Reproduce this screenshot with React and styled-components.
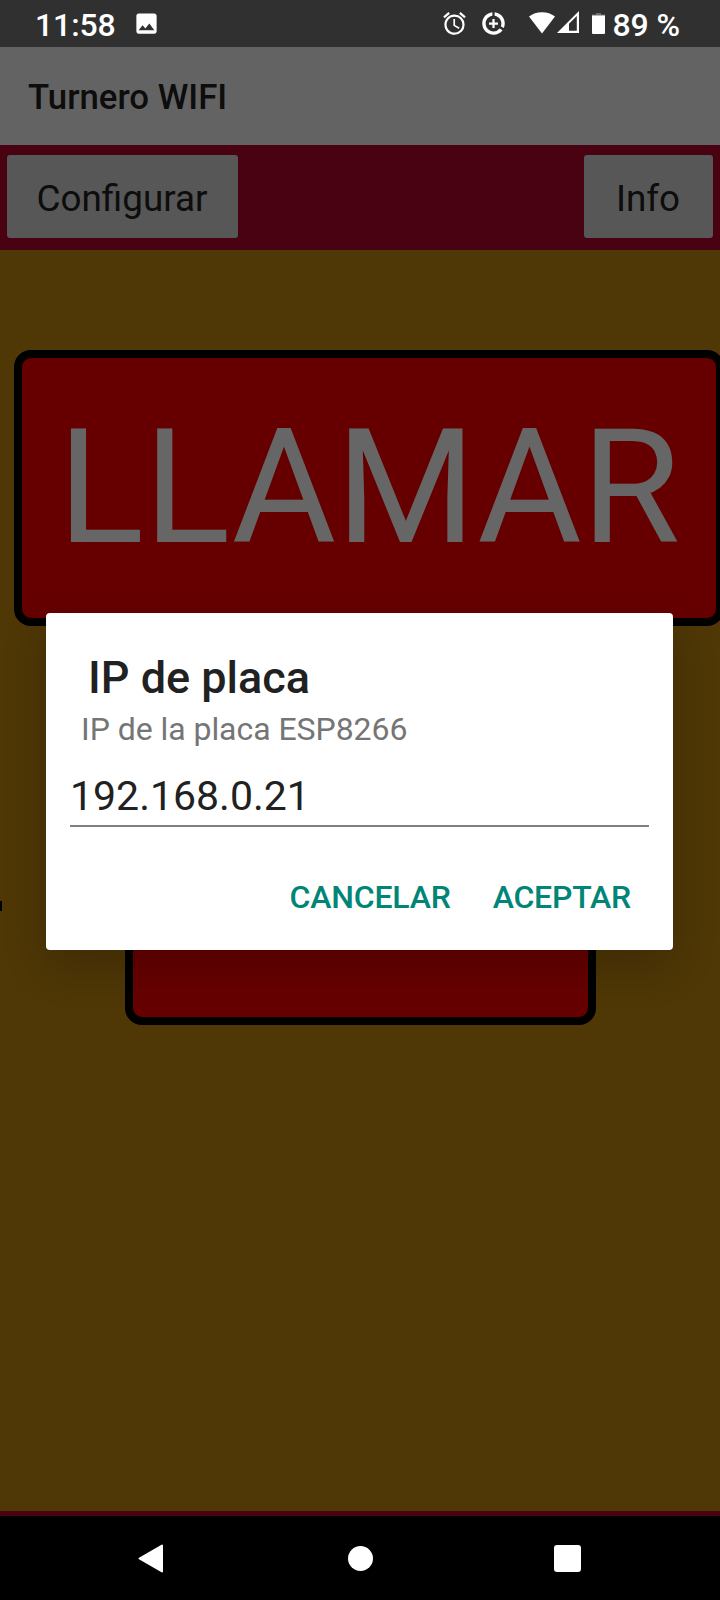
import React, { useState } from "react";
import styled, { createGlobalStyle } from "styled-components";
import { MdAlarm, MdDataSaverOn, MdImage } from "react-icons/md";

const GlobalStyle = createGlobalStyle`
  * {
    box-sizing: border-box;
  }
  body {
    margin: 0;
    background: #000;
    font-family: Roboto, "Noto Sans", sans-serif;
  }
  button,
  input {
    font-family: inherit;
    border: none;
    outline: none;
    padding: 0;
    margin: 0;
  }
`;

const WifiIcon = () => (
  <svg width="26" height="22" viewBox="0 0 26 22">
    <path d="M0 4.6C3.6 1.7 8 0.2 13 0.2s9.400 1.500 13 4.400L13 21.500z" fill="#fff" />
  </svg>
);

const SignalIcon = () => (
  <svg width="22" height="22" viewBox="0 0 22 22">
    <path d="M0 22L22 0v22zM12 19.800h7.800V5l-7.800 7.800z" fill="#fff" fillRule="evenodd" />
  </svg>
);

const BatteryIcon = () => (
  <svg width="13" height="21" viewBox="0 0 13 21">
    <path d="M4 0h5v1.500h4V3H0V1.500h4z" fill="#6e6e6e" />
    <path d="M0 2.500h13V20a1 1 0 0 1-1 1H1a1 1 0 0 1-1-1z" fill="#fff" />
  </svg>
);

const BackIcon = () => (
  <svg width="25" height="29" viewBox="0 0 25 29">
    <path
      d="M1.500 14.500L24 1.500v26z"
      fill="#fff"
      stroke="#fff"
      strokeWidth="2"
      strokeLinejoin="round"
    />
  </svg>
);

const App = () => {
  const [ip, setIp] = useState("192.168.0.21");

  return (
    <Phone>
      <GlobalStyle />
      <StatusBar>
        <StatusText>11:58</StatusText>
        <IconSlot $left={17}>
          <MdImage size={27} />
        </IconSlot>
        <StatusRight>
          <IconSlot>
            <MdAlarm size={27} />
          </IconSlot>
          <IconSlot $left={12}>
            <MdDataSaverOn size={27} />
          </IconSlot>
          <IconSlot $left={22} $lift={1}>
            <WifiIcon />
          </IconSlot>
          <IconSlot $left={2} $lift={4}>
            <SignalIcon />
          </IconSlot>
          <IconSlot $left={13}>
            <BatteryIcon />
          </IconSlot>
          <StatusText $left={8}>89 %</StatusText>
        </StatusRight>
      </StatusBar>

      <Screen>
        <TitleBar>Turnero WIFI</TitleBar>
        <Toolbar>
          <ToolbarButton $width={231}>Configurar</ToolbarButton>
          <ToolbarButton $width={129}>Info</ToolbarButton>
        </Toolbar>
        <Board>
          <CallButton $width={710} $height={276}>
            LLAMAR
          </CallButton>
          <Dash />
          <CallButton $width={471} $height={114} $center />
        </Board>
        <BottomStrip />

        <Scrim>
          <Dialog>
            <DialogTitle>IP de placa</DialogTitle>
            <DialogMessage>IP de la placa ESP8266</DialogMessage>
            <DialogInput value={ip} onChange={(e) => setIp(e.target.value)} />
            <DialogActions>
              <DialogButton>CANCELAR</DialogButton>
              <DialogButton>ACEPTAR</DialogButton>
            </DialogActions>
          </Dialog>
        </Scrim>
      </Screen>

      <NavBar>
        <BackIcon />
        <HomeDot />
        <RecentSquare />
      </NavBar>
    </Phone>
  );
};

const Phone = styled.div`
  display: flex;
  flex-direction: column;
  width: 720px;
  height: 1600px;
  overflow: hidden;
`;

const StatusBar = styled.div`
  display: flex;
  align-items: center;
  height: 47px;
  padding: 0 40px 0 35px;
  background: #303030;
  color: #fff;
`;

const StatusText = styled.span`
  margin-left: ${(props) => props.$left || 0}px;
  padding-top: 2px;
  font-size: 32px;
  font-weight: 500;
  line-height: 50px;
  letter-spacing: -0.1px;
  white-space: pre;
`;

const IconSlot = styled.span`
  display: flex;
  margin-left: ${(props) => props.$left || 0}px;
  padding-bottom: ${(props) => props.$lift || 0}px;
`;

const StatusRight = styled.div`
  display: flex;
  align-items: center;
  margin-left: auto;
`;

const Screen = styled.div`
  position: relative;
  display: flex;
  flex-direction: column;
  height: 1469px;
`;

const TitleBar = styled.div`
  height: 98px;
  padding-left: 28px;
  background: #f8f8f8;
  color: #212121;
  font-size: 34.8px;
  font-weight: 500;
  line-height: 101px;
`;

const Toolbar = styled.div`
  display: flex;
  justify-content: space-between;
  height: 105px;
  padding: 10px 7px 12px;
  background: #b4072d;
`;

const ToolbarButton = styled.button`
  width: ${(props) => props.$width}px;
  height: 83px;
  padding: 4px 1px 0 0;
  border-radius: 3px;
  background: #d9d9d9;
  color: #212121;
  font-size: 36.8px;
`;

const Board = styled.div`
  display: flex;
  flex-direction: column;
  align-items: flex-start;
  height: 1261px;
  padding: 100px 0 0 14px;
  background: #c68a10;
  overflow: hidden;
`;

const CallButton = styled.button`
  flex-shrink: 0;
  width: ${(props) => props.$width}px;
  height: ${(props) => props.$height}px;
  margin-left: ${(props) => (props.$center ? 111 : 0)}px;
  border: 8px solid #000;
  border-radius: 17px;
  background: #ff0000;
  color: #fff;
  font-size: 160px;
  line-height: 1;
  white-space: nowrap;
`;

/* end of the counter text that runs off the left edge */
const Dash = styled.div`
  width: 2px;
  height: 10px;
  margin: 275px 0 0 -14px;
  background: #000;
`;

const BottomStrip = styled.div`
  height: 5px;
  background: #b4072d;
`;

const Scrim = styled.div`
  position: absolute;
  inset: 0;
  padding: 566px 47px 0 46px;
  background: rgba(0, 0, 0, 0.6);
`;

const Dialog = styled.div`
  display: flex;
  flex-direction: column;
  height: 337px;
  padding: 38px 24px 0;
  border-radius: 4px;
  background: #fff;
  box-shadow: 0 16px 44px rgba(0, 0, 0, 0.2);
`;

const DialogTitle = styled.div`
  padding-left: 18px;
  color: #212121;
  font-size: 45px;
  font-weight: 500;
  line-height: 54px;
`;

const DialogMessage = styled.div`
  padding-left: 11px;
  color: #757575;
  font-size: 32px;
  line-height: 48px;
  letter-spacing: -0.05px;
`;

const DialogInput = styled.input`
  height: 74px;
  padding-top: 14px;
  border-bottom: 2px solid #808080;
  background: transparent;
  color: #212121;
  font-size: 41px;
`;

const DialogActions = styled.div`
  display: flex;
  justify-content: flex-end;
  gap: 42px;
  padding: 46px 18px 0 0;
`;

const DialogButton = styled.button`
  background: transparent;
  color: #008577;
  font-size: 32px;
  font-weight: 500;
  line-height: 48px;
  letter-spacing: -0.2px;
`;

const NavBar = styled.div`
  display: flex;
  align-items: center;
  justify-content: space-between;
  height: 84px;
  padding: 0 139px 0 138px;
  background: #000;
`;

const HomeDot = styled.div`
  width: 25px;
  height: 25px;
  margin-left: 3px;
  border-radius: 50%;
  background: #fff;
`;

const RecentSquare = styled.div`
  width: 27px;
  height: 27px;
  border-radius: 3px;
  background: #fff;
`;

export default App;
